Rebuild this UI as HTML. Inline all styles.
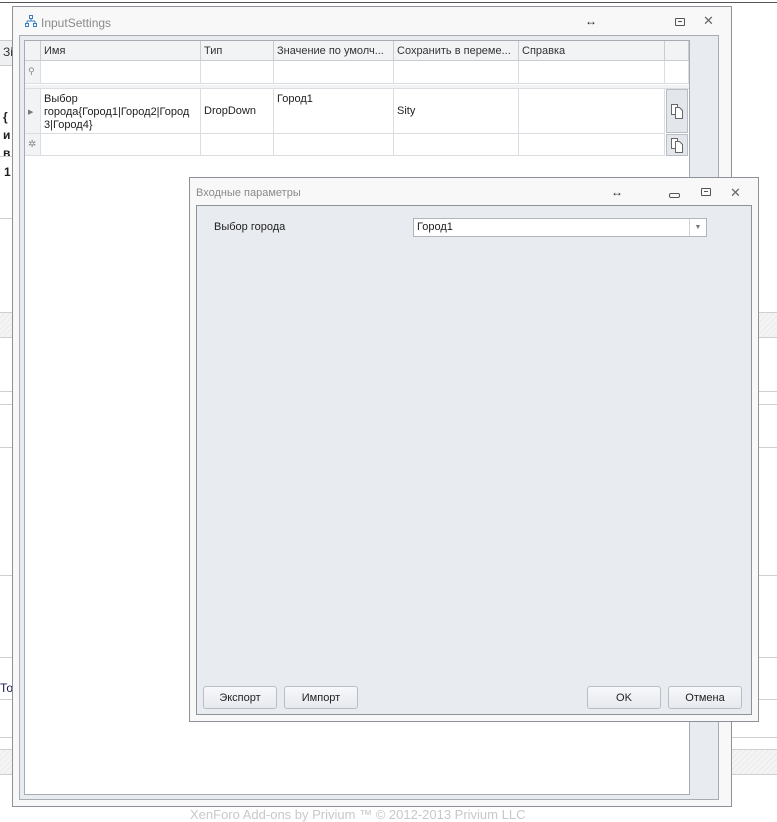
<!DOCTYPE html>
<html><head><meta charset="utf-8"><style>
*{margin:0;padding:0;box-sizing:border-box}
body{width:777px;height:813px;background:#fff;position:relative;overflow:hidden;font-family:"Liberation Sans","DejaVu Sans",sans-serif;font-size:11px;color:#1e1e1e}
.a{position:absolute}
.hl{position:absolute;height:1px;background:#cfcfcf}
.hatch{position:absolute;height:26px;background:repeating-linear-gradient(135deg,#f4f4f4 0 3px,#ebebeb 3px 4px);border-top:1px solid #cfcfcf;border-bottom:1px solid #cfcfcf}
.cell{position:absolute;border-right:1px solid #dadde2;border-bottom:1px solid #dadde2;padding:4px 3px 3px;line-height:13px}
.hd{background:#f2f3f5;border-right:1px solid #c9ccd2;border-bottom:1px solid #c9ccd2;color:#333}
.btn{position:absolute;height:23px;width:74px;border:1px solid #b9bdc4;border-radius:3px;background:linear-gradient(#f7f8fa,#e6e9ee);text-align:center;line-height:22px;color:#222;font-size:11px}
.cp{position:absolute;width:22px;background:#e3e6eb;border:1px solid #b9bdc4}
</style></head><body>
<div class="a" style="left:0;top:2px;width:777px;height:1px;background:#555"></div>
<div class="a" style="left:0;top:40px;width:12px;height:26px;background:#eef0f2;border-top:1px solid #ccc;border-bottom:1px solid #ccc;font-size:12px;padding:4px 0 0 3px;color:#333">Зі</div>
<div class="a" style="left:3px;top:108px;font-size:12px;line-height:18px;font-weight:bold">{<br>и<br>в</div>
<div class="a" style="left:4px;top:165px;font-size:12px;font-weight:bold">1</div>
<div class="hl" style="left:0;top:156px;width:12px"></div>
<div class="hl" style="left:0;top:218px;width:12px"></div>
<div class="hatch" style="left:0;top:312px;width:777px"></div>
<div class="hl" style="left:0;top:391px;width:777px"></div>
<div class="hl" style="left:0;top:404px;width:777px"></div>
<div class="hl" style="left:0;top:447px;width:777px"></div>
<div class="hl" style="left:0;top:575px;width:777px"></div>
<div class="hl" style="left:0;top:657px;width:777px"></div>
<div class="a" style="left:0;top:681px;font-size:12px;color:#1a1a50">То</div>
<div class="hl" style="left:0;top:699px;width:777px"></div>
<div class="hl" style="left:0;top:737px;width:777px"></div>
<div class="hatch" style="left:0;top:749px;width:777px"></div>
<div class="a" style="left:190px;top:807px;color:#c8c8c8;font-size:13px">XenForo Add-ons by Privium ™ © 2012-2013 Privium LLC</div>

<div class="a" style="left:12px;top:6px;width:720px;height:801px;background:#f8f8f8;border:1px solid #8e9197"></div>
<div class="a" style="left:25px;top:15px;width:12px;height:12px">
<svg width="12" height="12" viewBox="0 0 12 12"><g fill="none" stroke="#3a7fc4" stroke-width="1"><rect x="4.5" y="0.5" width="3" height="3"/><path d="M6 3.5V6M2 6H10M2 6V8M10 6V8"/><rect x="0.5" y="8.5" width="3" height="3"/><rect x="8.5" y="8.5" width="3" height="3"/></g></svg></div>
<div class="a" style="left:41px;top:16px;color:#8a8a8a;font-size:12px">InputSettings</div>
<div class="a" style="left:585px;top:14px;font-size:12px;font-weight:bold;color:#222">↔</div>
<div class="a" style="left:675px;top:18px;width:10px;height:8px;border:1px solid #555;border-radius:1px"><div style="margin:2px 2px;height:1px;background:#555"></div></div>
<div class="a" style="left:703px;top:13px;font-size:13px;color:#666">✕</div>
<div class="a" style="left:19px;top:35px;width:700px;height:765px;background:#e8ebf0;border:1px solid #a7abb2"></div>
<div class="a" style="left:24px;top:40px;width:666px;height:755px;background:#fff;border:1px solid #a7abb2"></div>

<div class="cell hd" style="left:25px;top:41px;width:16px;height:20px"></div>
<div class="cell hd" style="left:41px;top:41px;width:160px;height:20px">Имя</div>
<div class="cell hd" style="left:201px;top:41px;width:73px;height:20px">Тип</div>
<div class="cell hd" style="left:274px;top:41px;width:120px;height:20px">Значение по умолч...</div>
<div class="cell hd" style="left:394px;top:41px;width:125px;height:20px">Сохранить в переме...</div>
<div class="cell hd" style="left:519px;top:41px;width:146px;height:20px">Справка</div>
<div class="cell hd" style="left:665px;top:41px;width:24px;height:20px"></div>

<div class="cell" style="left:25px;top:61px;width:16px;height:23px;background:#f2f3f5;color:#888;font-size:9px">⚲</div>
<div class="cell" style="left:41px;top:61px;width:160px;height:23px"></div>
<div class="cell" style="left:201px;top:61px;width:73px;height:23px"></div>
<div class="cell" style="left:274px;top:61px;width:120px;height:23px"></div>
<div class="cell" style="left:394px;top:61px;width:125px;height:23px"></div>
<div class="cell" style="left:519px;top:61px;width:146px;height:23px"></div>
<div class="cell" style="left:665px;top:61px;width:24px;height:23px"></div>
<div class="a" style="left:25px;top:85px;width:664px;height:4px;background:#f2f3f5;border-bottom:1px solid #dadde2"></div>

<div class="cell" style="left:25px;top:89px;width:16px;height:45px;background:#f2f3f5;color:#777;font-size:7px;padding-top:17px">▶</div>
<div class="cell" style="left:41px;top:89px;width:160px;height:45px">Выбор<br>города{Город1|Город2|Город<br>3|Город4}</div>
<div class="cell" style="left:201px;top:89px;width:73px;height:45px;padding-top:16px">DropDown</div>
<div class="cell" style="left:274px;top:89px;width:120px;height:45px">Город1</div>
<div class="cell" style="left:394px;top:89px;width:125px;height:45px;padding-top:16px">Sity</div>
<div class="cell" style="left:519px;top:89px;width:146px;height:45px"></div>
<div class="cp" style="left:666px;top:89px;height:44px"></div>
<div class="cell" style="left:25px;top:134px;width:16px;height:22px;background:#f2f3f5;color:#888;font-size:10px">✲</div>
<div class="cell" style="left:41px;top:134px;width:160px;height:22px"></div>
<div class="cell" style="left:201px;top:134px;width:73px;height:22px"></div>
<div class="cell" style="left:274px;top:134px;width:120px;height:22px"></div>
<div class="cell" style="left:394px;top:134px;width:125px;height:22px"></div>
<div class="cell" style="left:519px;top:134px;width:146px;height:22px"></div>
<div class="cp" style="left:666px;top:134px;height:22px"></div>
<svg class="a" style="left:670px;top:103px" width="14" height="16" viewBox="0 0 14 16"><path d="M1.5 1.5h6v10h-6z" fill="#fff" stroke="#666"/><path d="M5.5 4.5h4l3 3v8h-7z" fill="#fff" stroke="#666"/></svg>
<svg class="a" style="left:670px;top:137px" width="14" height="16" viewBox="0 0 14 16"><path d="M1.5 1.5h6v10h-6z" fill="#fff" stroke="#666"/><path d="M5.5 4.5h4l3 3v8h-7z" fill="#fff" stroke="#666"/></svg>

<div class="a" style="left:189px;top:177px;width:570px;height:545px;background:#f8f8f8;border:1px solid #8e9197"></div>
<div class="a" style="left:196px;top:187px;color:#8a8a8a;font-size:11px">Входные параметры</div>
<div class="a" style="left:611px;top:185px;font-size:12px;font-weight:bold;color:#222">↔</div>
<div class="a" style="left:669px;top:193px;width:11px;height:5px;border:1px solid #555;border-radius:2px"></div>
<div class="a" style="left:701px;top:188px;width:10px;height:8px;border:1px solid #555;border-radius:1px"><div style="margin:2px 2px;height:1px;background:#555"></div></div>
<div class="a" style="left:730px;top:185px;font-size:13px;color:#666">✕</div>
<div class="a" style="left:196px;top:205px;width:556px;height:510px;background:#e8ebf0;border:1px solid #8e9197"></div>
<div class="a" style="left:214px;top:221px">Выбор города</div>
<div class="a" style="left:413px;top:218px;width:294px;height:19px;background:#fff;border:1px solid #b0b4bb;padding:2px 3px">Город1</div>
<div class="a" style="left:689px;top:219px;width:17px;height:17px;border-left:1px solid #d0d3d8;color:#777;font-size:7px;text-align:center;line-height:17px">▼</div>
<div class="btn" style="left:203px;top:686px">Экспорт</div>
<div class="btn" style="left:284px;top:686px">Импорт</div>
<div class="btn" style="left:587px;top:686px">OK</div>
<div class="btn" style="left:668px;top:686px">Отмена</div>
</body></html>
